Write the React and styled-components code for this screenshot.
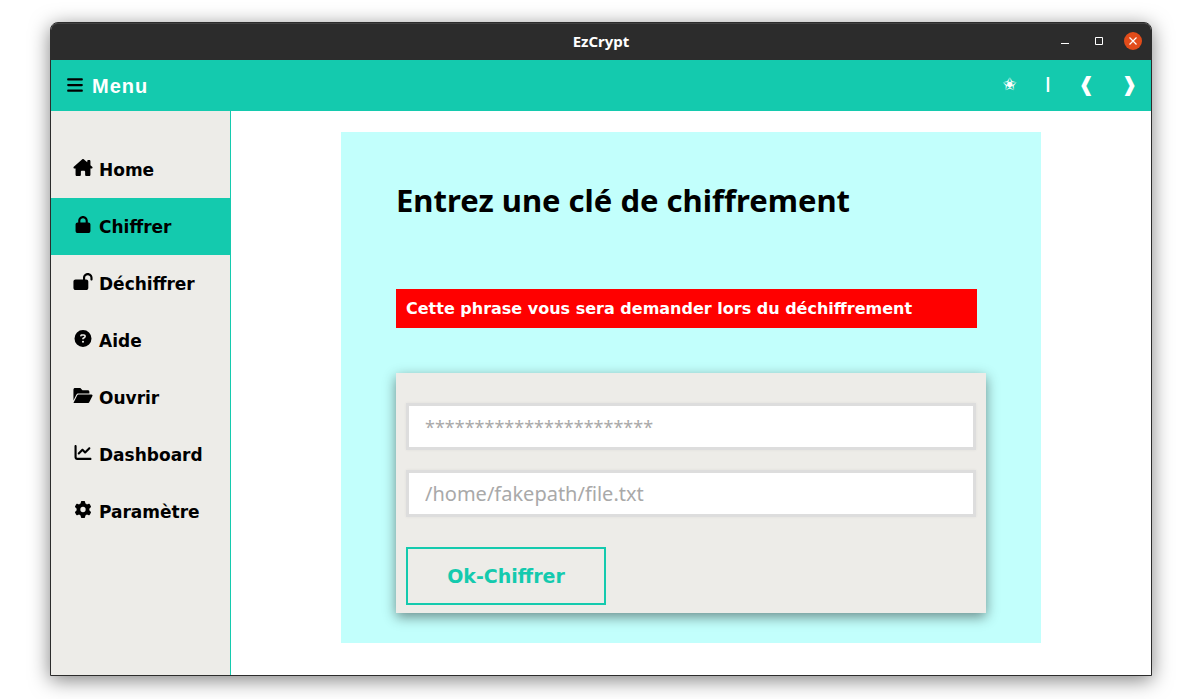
import React from "react";
import styled, { createGlobalStyle } from "styled-components";
import {
  FaBars,
  FaHouseChimney,
  FaLock,
  FaLockOpen,
  FaCircleQuestion,
  FaChartLine,
  FaGear,
} from "react-icons/fa6";

const teal = "#14caae";
const dark = "#2c2c2c";
const paper = "#edece8";

const GlobalStyle = createGlobalStyle`
  *, *::before, *::after { box-sizing: border-box; }
  body {
    margin: 0;
    background: #fff;
    color: #000;
    font-family: "DejaVu Sans", sans-serif;
  }
`;

const Desktop = styled.div`
  min-height: 100vh;
  padding: 22px 48px 23px 50px;
  display: flex;
`;

const Window = styled.div`
  flex: 1;
  display: flex;
  flex-direction: column;
  border: 1px solid ${dark};
  border-radius: 8px 8px 0 0;
  background: #fff;
  box-shadow: 0 4px 20px rgba(0, 0, 0, 0.5);
`;

const TitleBar = styled.header`
  display: grid;
  grid-template-columns: 1fr auto 1fr;
  align-items: center;
  height: 37px;
  padding: 0 9px 2px;
  border-radius: 7px 7px 0 0;
  background: ${dark};
  box-shadow: inset 0 1px 0 #414141;
`;

const WindowTitle = styled.div`
  grid-column: 2;
  color: #fff;
  font: bold 15px/20px "Noto Sans", sans-serif;
`;

const WindowControls = styled.div`
  display: flex;
  justify-content: flex-end;
  gap: 16px;
`;

const WindowButton = styled.button`
  display: flex;
  align-items: center;
  justify-content: center;
  width: 18px;
  height: 18px;
  padding: 0;
  border: 0;
  border-radius: 50%;
  color: #fff;
  background: ${(p) => (p.$close ? "#e24c1a" : "transparent")};
`;

const NavBar = styled.nav`
  display: flex;
  align-items: center;
  justify-content: space-between;
  height: 51px;
  padding: 0 11px 0 15px;
  background: ${teal};
`;

const MenuButton = styled.button`
  display: flex;
  align-items: center;
  gap: 8px;
  padding: 0;
  border: 0;
  background: none;
  color: #fff;
  font: bold 20px/24px "Liberation Sans", sans-serif;
  letter-spacing: 1px;

  svg {
    margin-bottom: 2px;
    color: #000;
  }
`;

const NavTools = styled.div`
  display: flex;
  align-items: center;
  gap: 22px;
  padding-bottom: 3px;
  color: #fff;
`;

const NavTool = styled.button`
  width: 21px;
  padding: 0;
  border: 0;
  background: none;
  color: #fff;
  text-align: center;
  font: ${(p) => (p.$small ? "17px/24px" : "20px/24px")} "DejaVu Sans", sans-serif;
`;

const Divider = styled.span`
  width: 12px;
  text-align: center;
  font: bold 17px/20px "Liberation Sans", sans-serif;
`;

const Body = styled.div`
  flex: 1;
  display: flex;
`;

const Sidebar = styled.aside`
  flex: 0 0 180px;
  padding-top: 30px;
  border-right: 1px solid ${teal};
  background: ${paper};
`;

const SideLink = styled.a`
  display: flex;
  align-items: center;
  gap: 6px;
  height: 57px;
  padding-left: 22px;
  color: #000;
  background: ${(p) => (p.$active ? teal : "transparent")};
  text-decoration: none;
  font: bold 17px/24px "DejaVu Sans", sans-serif;
`;

const SideIcon = styled.span`
  display: flex;
  width: 20px;
  padding-bottom: 4px;

  svg {
    width: 20px;
    height: 17px;
  }
`;

const Main = styled.main`
  flex: 1;
  padding: 21px 20px 32px;
`;

const Card = styled.section`
  max-width: 700px;
  margin: 0 auto;
  padding: 44px 55px 30px;
  background: #c2fffc;
`;

const Heading = styled.h1`
  margin: 0;
  font: bold 31px/48px "Noto Sans", sans-serif;
`;

const Alert = styled.p`
  margin: 65px 9px 45px 0;
  padding: 10px 10px 9px;
  background: #f00;
  color: #fff;
  font: bold 16px/20px "DejaVu Sans", sans-serif;
`;

const KeyForm = styled.form`
  display: flex;
  flex-direction: column;
  align-items: flex-start;
  padding: 30px 10px 8px;
  background: ${paper};
  box-shadow: 0 4px 12px rgba(0, 0, 0, 0.45);
`;

const Field = styled.input`
  width: 100%;
  height: 47px;
  margin-bottom: 20px;
  padding: 0 16px;
  border: 3px solid #dddddd;
  border-radius: 0;
  background: #fff;
  box-shadow: 0 0 3px rgba(0, 0, 0, 0.06);
  font: ${(p) => (p.type === "password" ? "18px" : "20px")}/24px "Noto Sans", sans-serif;

  &::placeholder {
    color: #a9a9a9;
    opacity: 1;
  }
`;

const Submit = styled.button`
  width: 200px;
  height: 58px;
  margin-top: 10px;
  border: 2px solid ${teal};
  background: transparent;
  color: ${teal};
  font: bold 19px/24px "DejaVu Sans", sans-serif;
`;

function FolderOpenIcon() {
  return (
    <svg viewBox="0 0 576 512" fill="currentColor" aria-hidden="true">
      <path d="M147.8 192H480V144C480 117.5 458.5 96 432 96h-160l-64-64h-160C21.49 32 0 53.49 0 80v328.4l90.54-181.1C101.4 205.6 123.4 192 147.8 192zM543.1 224H147.8C135.7 224 124.6 230.8 119.2 241.7L0 480h447.1c12.12 0 23.2-6.852 28.62-17.69l96-192C583.2 249 567.7 224 543.1 224z" />
    </svg>
  );
}

const links = [
  { label: "Home", icon: FaHouseChimney },
  { label: "Chiffrer", icon: FaLock, active: true },
  { label: "Déchiffrer", icon: FaLockOpen },
  { label: "Aide", icon: FaCircleQuestion },
  { label: "Ouvrir", icon: FolderOpenIcon },
  { label: "Dashboard", icon: FaChartLine },
  { label: "Paramètre", icon: FaGear },
];

export default function App() {
  return (
    <>
      <GlobalStyle />
      <Desktop>
        <Window>
          <TitleBar>
            <WindowTitle>EzCrypt</WindowTitle>
            <WindowControls>
              <WindowButton aria-label="Réduire">
                <svg width="8" height="8" viewBox="0 0 8 8">
                  <path d="M0 6.5H8" stroke="currentColor" />
                </svg>
              </WindowButton>
              <WindowButton aria-label="Agrandir">
                <svg width="8" height="8" viewBox="0 0 8 8">
                  <path d="M.5 .5H7.5V7.5H.5Z" fill="none" stroke="currentColor" />
                </svg>
              </WindowButton>
              <WindowButton $close aria-label="Fermer">
                <svg width="8" height="8" viewBox="0 0 8 8">
                  <path d="M.5 .5L7.5 7.5M7.5 .5L.5 7.5" stroke="currentColor" strokeWidth="1.2" />
                </svg>
              </WindowButton>
            </WindowControls>
          </TitleBar>
          <NavBar>
            <MenuButton>
              <FaBars size={18} />
              Menu
            </MenuButton>
            <NavTools>
              <NavTool $small aria-label="Favoris">✬</NavTool>
              <Divider>|</Divider>
              <NavTool aria-label="Précédent">❰</NavTool>
              <NavTool aria-label="Suivant">❱</NavTool>
            </NavTools>
          </NavBar>
          <Body>
            <Sidebar>
              {links.map(({ label, icon: Icon, active }) => (
                <SideLink key={label} href="#" $active={active}>
                  <SideIcon>
                    <Icon />
                  </SideIcon>
                  {label}
                </SideLink>
              ))}
            </Sidebar>
            <Main>
              <Card>
                <Heading>Entrez une clé de chiffrement</Heading>
                <Alert>Cette phrase vous sera demander lors du déchiffrement</Alert>
                <KeyForm>
                  <Field
                    type="password"
                    aria-label="Clé de chiffrement"
                    placeholder="***********************"
                  />
                  <Field
                    type="text"
                    aria-label="Chemin du fichier"
                    placeholder="/home/fakepath/file.txt"
                  />
                  <Submit type="button">Ok-Chiffrer</Submit>
                </KeyForm>
              </Card>
            </Main>
          </Body>
        </Window>
      </Desktop>
    </>
  );
}
